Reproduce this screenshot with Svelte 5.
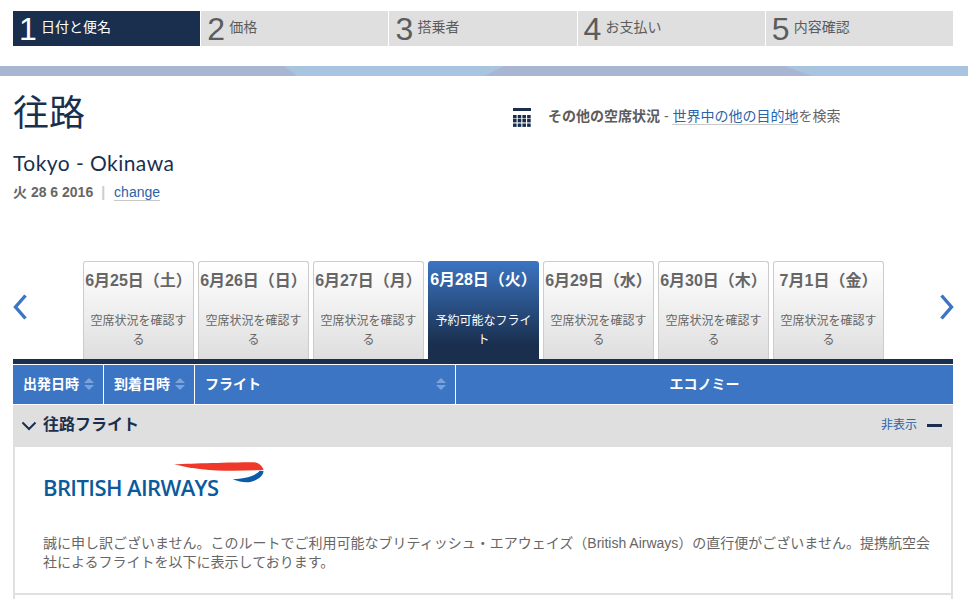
<script>
  const steps = [
    { n: 1, label: '日付と便名' },
    { n: 2, label: '価格' },
    { n: 3, label: '搭乗者' },
    { n: 4, label: 'お支払い' },
    { n: 5, label: '内容確認' }
  ];
  const days = [
    { date: '6月25日（土）', note: '空席状況を確認する' },
    { date: '6月26日（日）', note: '空席状況を確認する' },
    { date: '6月27日（月）', note: '空席状況を確認する' },
    { date: '6月28日（火）', note: '予約可能なフライト', active: true },
    { date: '6月29日（水）', note: '空席状況を確認する' },
    { date: '6月30日（木）', note: '空席状況を確認する' },
    { date: '7月1日（金）', note: '空席状況を確認する' }
  ];
</script>

<main>
  <ol class="steps">
    {#each steps as s, i}
      <li class:current={i === 0}><b>{s.n}</b><span>{s.label}</span></li>
    {/each}
  </ol>

  <div class="band">
    <svg width="968" height="10" viewBox="0 0 968 10" preserveAspectRatio="none">
      <rect width="968" height="10" fill="#a7c5e0" />
      <path d="M0 0H284L297 10H0Z" fill="#a9b6d1" />
      <path d="M484 10L504 0H785L812 10Z" fill="#a9b6d1" />
    </svg>
  </div>

  <section class="intro">
    <div class="route">
      <h1>往路</h1>
      <h2>Tokyo - Okinawa</h2>
      <p class="when"><strong>火 28 6 2016</strong><i>|</i><a href="#change">change</a></p>
    </div>
    <div class="other">
      <svg width="18" height="20" viewBox="0 0 18 20" fill="#1a2f4e">
        <rect y="0" width="18" height="3" />
        {#each [7, 11, 15.5] as y}
          {#each [0, 4.7, 9.4, 14.1] as x}
            <rect {x} {y} width="3.6" height="3.4" />
          {/each}
        {/each}
      </svg>
      <p><strong>その他の空席状況</strong> - <a href="#world">世界中の他の目的地</a>を検索</p>
    </div>
  </section>

  <div class="carousel">
    <svg class="arrow" width="14" height="26" viewBox="0 0 14 26"><path d="M12.5 1.5L2.5 13L12.5 24.5" /></svg>
    <div class="tabs">
      {#each days as d}
        <div class="tab" class:active={d.active}>
          <div class="date">{d.date}</div>
          <div class="note">{d.note}</div>
        </div>
      {/each}
    </div>
    <svg class="arrow" width="14" height="26" viewBox="0 0 14 26"><path d="M1.5 1.5L11.5 13L1.5 24.5" /></svg>
  </div>

  <div class="table">
    <div class="head">
      <div class="col c1">出発日時<span class="sort"></span></div>
      <div class="col c2">到着日時<span class="sort"></span></div>
      <div class="col c3">フライト<span class="sort"></span></div>
      <div class="col c4">エコノミー</div>
    </div>
    <div class="group">
      <svg width="16" height="10" viewBox="0 0 16 10"><path d="M1.5 1.5L8 8L14.5 1.5" /></svg>
      <h3>往路フライト</h3>
      <a href="#hide">非表示</a>
      <span class="dash"></span>
    </div>
    <div class="panel">
      <div class="logo">
        <span>BRITISH AIRWAYS</span>
        <svg width="90" height="24" viewBox="0 0 90 24">
          <path d="M0 2.3C20 1.5 55 .3 78 .2C84 .2 88 3 89.5 8L60 8.8C40 9 18 7 0 2.3Z" fill="#ef3829" />
          <path d="M89.5 9C89.5 13 85 17 80 18.7C74 21.5 67 20.5 58.7 17.3C68 17 76 15 80 13C83 11.5 85 10 85.5 8.8Z" fill="#0a5ca8" />
        </svg>
      </div>
      <p>誠に申し訳ございません。このルートでご利用可能なブリティッシュ・エアウェイズ（British Airways）の直行便がございません。提携航空会社によるフライトを以下に表示しております。</p>
    </div>
    <div class="next"></div>
  </div>
</main>

<style>
  :global(body) {
    margin: 0;
    background: #fff;
    overflow: hidden;
  }
  main {
    height: 599px;
    overflow: hidden;
    font-family: "Liberation Sans", "Noto Sans CJK JP", sans-serif;
    color: #666;
  }
  a {
    color: #2b63a8;
    text-decoration: none;
    border-bottom: 1px solid #c8c8c8;
  }
  .steps {
    display: grid;
    grid-template-columns: repeat(5, 1fr);
    gap: 1px;
    margin: 11px 15px 0 13px;
    padding: 0;
    list-style: none;
  }
  .steps li {
    display: flex;
    height: 35px;
    padding-left: 6px;
    background: #dfdfdf;
    color: #5c5c5c;
    font-size: 14px;
  }
  .steps li.current {
    background: #1a2f4e;
    color: #fff;
  }
  .steps b {
    width: 22px;
    font-size: 32px;
    font-weight: 400;
    line-height: 36px;
  }
  .steps span {
    line-height: 33px;
  }
  .band {
    height: 10px;
    margin-top: 20px;
  }
  .band svg {
    display: block;
  }
  .intro {
    display: flex;
    height: 185px;
    padding-left: 13px;
  }
  .route {
    width: 500px;
  }
  h1 {
    margin: 13px 0 0;
    color: #1a2f4e;
    font-size: 36px;
    font-weight: 400;
    line-height: 50px;
  }
  h2 {
    margin: 11px 0 0;
    color: #1a2f4e;
    font-family: Lato, sans-serif;
    font-size: 21px;
    font-weight: 400;
    letter-spacing: 0.45px;
    line-height: 26px;
  }
  .when {
    margin: 7px 0 0;
    font-size: 14px;
    line-height: 18px;
  }
  .when i {
    margin: 0 9px 0 8px;
    color: #ccc;
    font-style: normal;
    font-weight: 700;
  }
  .other {
    display: flex;
    align-items: center;
    gap: 17px;
    height: 20px;
    margin-top: 32px;
    font-size: 14px;
  }
  .other p {
    margin: -6px 0 0;
  }
  .other strong {
    color: #5c5c5c;
  }
  .carousel {
    display: flex;
    align-items: center;
    justify-content: space-between;
    height: 98px;
    padding: 0 14px 0 13px;
  }
  .arrow {
    margin-bottom: 6px;
  }
  .arrow path {
    fill: none;
    stroke: #3b75c3;
    stroke-width: 3.4;
  }
  .tabs {
    display: flex;
    gap: 4px;
  }
  .tab {
    box-sizing: border-box;
    width: 111px;
    height: 98px;
    padding: 0 1px;
    border: 1px solid #ccc;
    border-bottom: 0;
    border-radius: 3px 3px 0 0;
    background: linear-gradient(#fff, #dedede);
    text-align: center;
    font-size: 12px;
    line-height: 19px;
  }
  .tab.active {
    border: 0;
    padding: 0 2px;
    background: linear-gradient(#3b75c3, #1a2f4e 85%);
    color: #fff;
  }
  .date {
    margin-top: 9px;
    font-size: 16px;
    font-weight: 700;
    line-height: 20px;
    white-space: nowrap;
  }
  .note {
    margin: 21px 5px 0;
  }
  .tab.active .note {
    margin-top: 22px;
  }
  .table {
    margin: 0 15px 0 13px;
    border-top: 5px solid #1a2f4e;
  }
  .head {
    display: flex;
    height: 39px;
    margin-top: 1px;
    background: #3b75c3;
    color: #fff;
    font-size: 14px;
    font-weight: 700;
    line-height: 38px;
  }
  .col {
    box-sizing: border-box;
    position: relative;
    padding-left: 10px;
    border-right: 1px solid #fff;
  }
  .c1 { width: 91px; }
  .c2 { width: 91px; }
  .c3 { width: 261px; }
  .c4 {
    flex: 1;
    padding: 0;
    border: 0;
    text-align: center;
  }
  .sort {
    position: absolute;
    top: 13px;
    right: 9px;
    border: 5px solid transparent;
    border-top-width: 0;
    border-bottom: 5px solid #7aa3da;
  }
  .sort::after {
    content: "";
    position: absolute;
    top: 7px;
    left: -5px;
    border: 5px solid transparent;
    border-bottom-width: 0;
    border-top: 5px solid #7aa3da;
  }
  .group {
    display: flex;
    align-items: center;
    height: 42px;
    margin-top: 1px;
    padding: 0 11px 0 8px;
    background: #dfdfdf;
  }
  .group svg path {
    fill: none;
    stroke: #1a2f4e;
    stroke-width: 2;
  }
  h3 {
    flex: 1;
    margin: -7px 0 0 6px;
    color: #1a2f4e;
    font-size: 16px;
    font-weight: 700;
  }
  .group a {
    margin-bottom: 5px;
    border: 0;
    font-size: 12px;
  }
  .dash {
    width: 15px;
    height: 3px;
    margin: 0 0 1px 10px;
    background: #1a2f4e;
  }
  .panel {
    height: 148px;
    box-sizing: border-box;
    padding: 15px 20px 0 28px;
    border: 2px solid #e0e0e0;
    border-top: 0;
  }
  .logo {
    display: flex;
    align-items: flex-end;
    height: 38px;
  }
  .logo span {
    color: #0a5a9c;
    font-family: "Open Sans", sans-serif;
    font-size: 22px;
    font-weight: 600;
    letter-spacing: -0.6px;
    line-height: 26px;
    white-space: nowrap;
  }
  .logo svg {
    align-self: flex-start;
    margin-left: -45px;
  }
  .panel p {
    margin: 34px 0 0;
    font-size: 14px;
    line-height: 19px;
  }
  .next {
    height: 40px;
    border: 2px solid #e0e0e0;
    border-width: 0 2px;
  }
</style>
